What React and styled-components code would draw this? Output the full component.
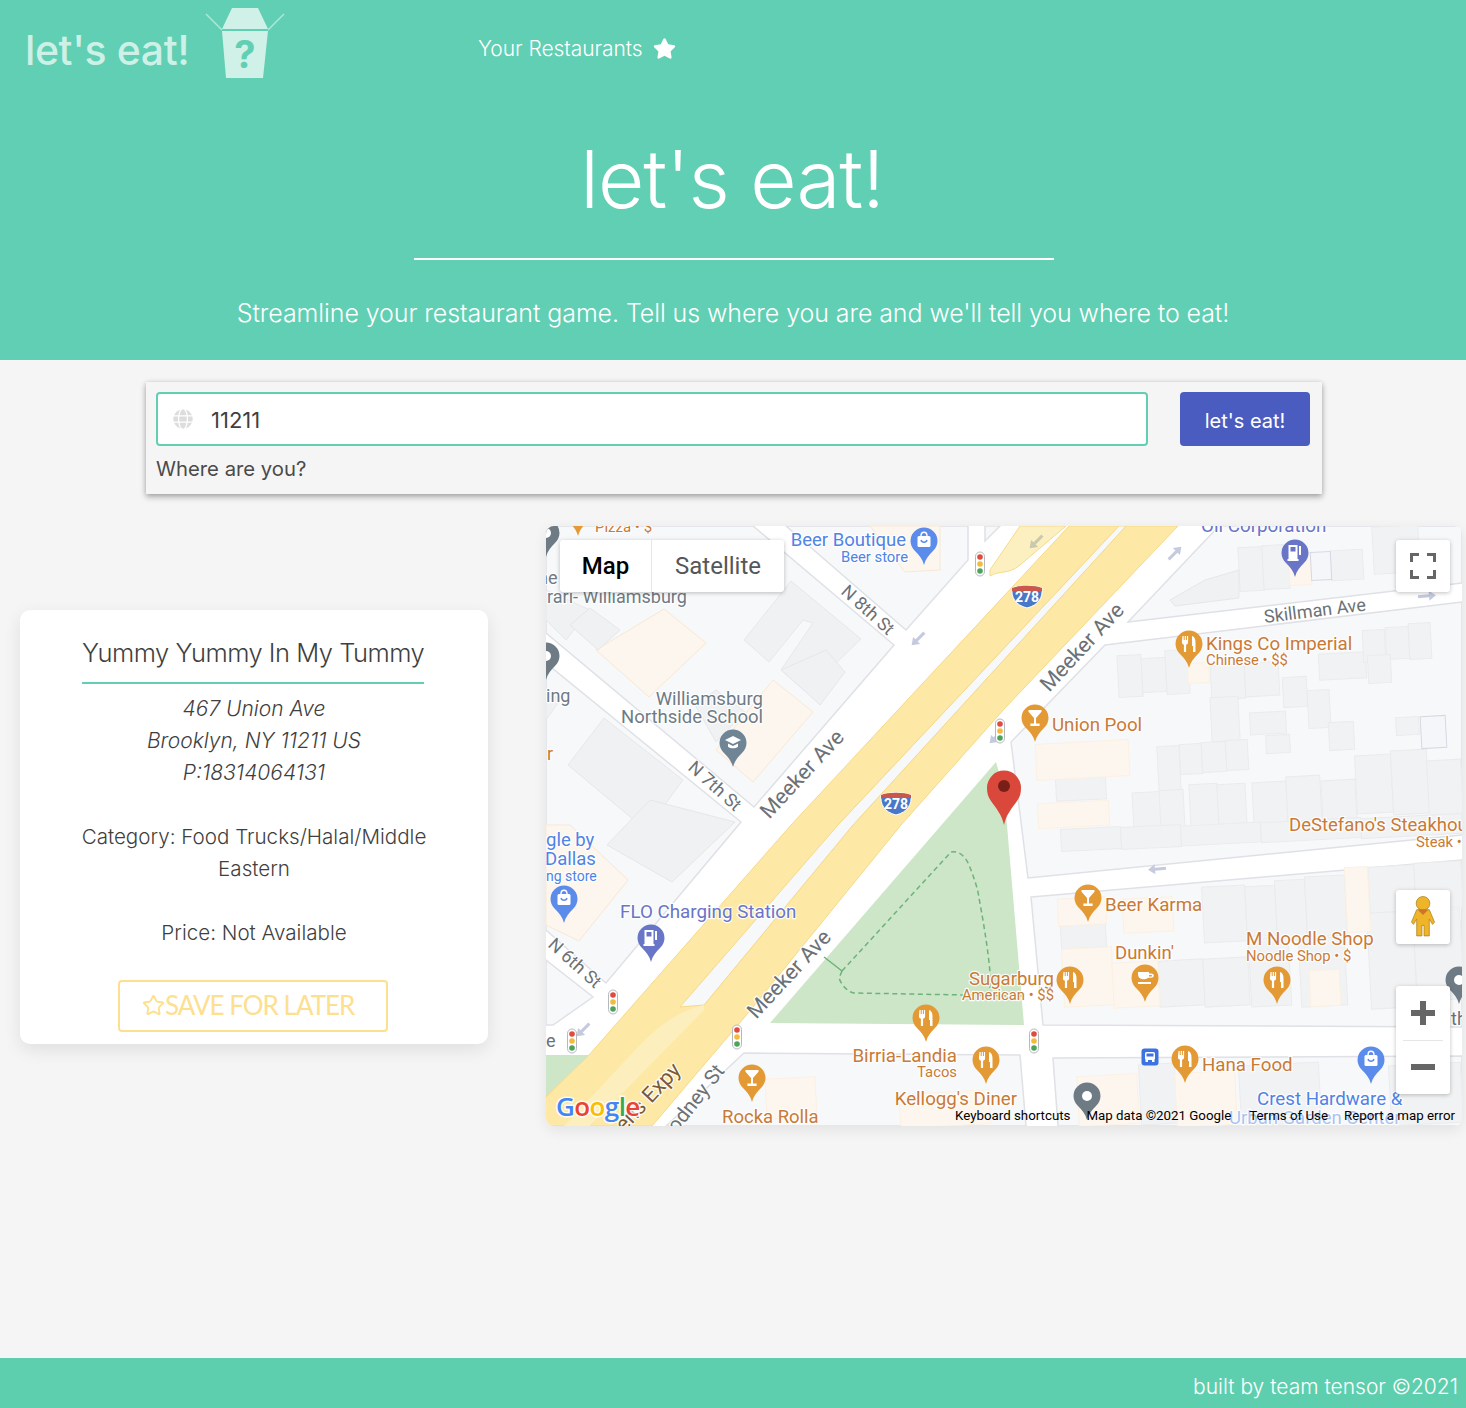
import React from 'react';
import styled, { createGlobalStyle } from 'styled-components';
import { FaStar, FaGlobe } from 'react-icons/fa';
import { Star } from 'lucide-react';

const GlobalStyle = createGlobalStyle`
  html, body {
    margin: 0;
    padding: 0;
    background: #f5f5f5;
    font-family: Inter, "Liberation Sans", sans-serif;
    color: #4a4a4a;
  }
`;

const Page = styled.div`
  min-height: 1408px;
  display: flex;
  flex-direction: column;
`;

const Header = styled.header`
  height: 360px;
  background: #61cfb3;
  color: #fff;
  display: flex;
  flex-direction: column;
`;

const Nav = styled.nav`
  height: 100px;
  display: flex;
  align-items: flex-start;
`;

const Brand = styled.div`
  width: 478px;
  padding-left: 25px;
  box-sizing: border-box;
  display: flex;
  align-items: flex-start;
`;

const BrandText = styled.span`
  font-size: 41px;
  line-height: 100px;
  font-weight: 500;
  color: rgba(255, 255, 255, 0.7);
  letter-spacing: -0.4px;
`;

const BrandBox = styled.svg`
  width: 80px;
  height: 72px;
  margin: 8px 0 0 16px;
`;

const NavLink = styled.a`
  display: flex;
  align-items: center;
  gap: 10px;
  height: 96px;
  font-size: 21px;
  font-weight: 300;
  letter-spacing: -0.05px;
  color: #fff;
`;

const Hero = styled.div`
  text-align: center;
`;

const HeroTitle = styled.h1`
  height: 160px;
  box-sizing: border-box;
  padding: 27px 4px 0 0;
  font-size: 80px;
  line-height: 104px;
  font-weight: 300;
  letter-spacing: -1px;
  width: 640px;
  margin: 0 0 0 414px;
  border-bottom: 2px solid #fff;
`;

const HeroText = styled.p`
  margin: 35px 0 0;
  font-size: 25px;
  line-height: 36px;
  font-weight: 300;
  letter-spacing: -0.09px;
`;

const SearchCard = styled.section`
  width: 1176px;
  height: 112px;
  margin: 22px auto 0 146px;
  padding: 10px 12px 0 10px;
  box-sizing: border-box;
  background: #f5f5f5;
  box-shadow: 0 3px 6px rgba(0, 0, 0, 0.3), 0 0 5px rgba(0, 0, 0, 0.1);
`;

const SearchRow = styled.div`
  display: flex;
  justify-content: space-between;
`;

const InputWrap = styled.div`
  width: 992px;
  height: 54px;
  box-sizing: border-box;
  border: 2px solid #61cfb3;
  border-radius: 4px;
  background: #fff;
  display: flex;
  align-items: center;
  gap: 18px;
  padding-left: 15px;
  color: #ddd;
`;

const InputValue = styled.span`
  font-size: 22px;
  padding-top: 2px;
  color: #3f3f3f;
  font-weight: 400;
`;

const EatButton = styled.button`
  width: 130px;
  height: 54px;
  padding: 4px 0 0;
  border: 0;
  border-radius: 4px;
  background: #4b5cc0;
  color: #fff;
  font-family: inherit;
  font-size: 20px;
  font-weight: 400;
`;

const SearchLabel = styled.div`
  margin-top: 9px;
  font-size: 20.3px;
  line-height: 28px;
  color: #4a4a4a;
`;

const Main = styled.main`
  display: grid;
  grid-template-columns: 468px 916px;
  column-gap: 58px;
  align-items: center;
  padding: 32px 4px 0 20px;
`;

const ResultCard = styled.article`
  height: 434px;
  margin-top: 2px;
  box-sizing: border-box;
  background: #fff;
  border-radius: 10px;
  box-shadow: 0 6px 18px rgba(0, 0, 0, 0.09);
  padding: 23px 40px 0;
  text-align: center;
`;

const ResultTitle = styled.h2`
  margin: 0 24px 9px 22px;
  padding-bottom: 9px;
  font-size: 25.5px;
  letter-spacing: -0.5px;
  line-height: 40px;
  font-weight: 300;
  color: #3f3f3f;
  white-space: nowrap;
  border-bottom: 2px solid #61cfb3;
`;

const ResultAddress = styled.div`
  font-size: 21px;
  line-height: 32px;
  font-style: italic;
  font-weight: 300;
  color: #3f3f3f;
`;

const ResultMeta = styled.div`
  margin-top: 32px;
  font-size: 20.6px;
  line-height: 32px;
  font-weight: 300;
  color: #3f3f3f;
`;

const SaveButton = styled.button`
  display: flex;
  align-items: center;
  width: 270px;
  height: 52px;
  margin: 31px 0 0 58px;
  padding: 0 0 2px 22px;
  box-sizing: border-box;
  border: 2px solid #fde08f;
  border-radius: 4px;
  background: #fff;
  color: #fde08f;
  font-family: Lato, sans-serif;
  font-size: 26px;
  font-weight: 400;
  letter-spacing: -1px;
  white-space: nowrap;
`;

const MapFrame = styled.div`
  position: relative;
  width: 916px;
  height: 600px;
  border-radius: 8px;
  overflow: hidden;
  box-shadow: 0 4px 14px rgba(0, 0, 0, 0.08);
`;

const MapCanvas = styled.svg`
  display: block;
  width: 916px;
  height: 600px;
`;

const MapLabel = styled.text`
  font-family: Roboto, sans-serif;
  font-size: ${(p) => p.$size}px;
  fill: ${(p) => p.$color};
  stroke: rgba(255, 255, 255, 0.9);
  stroke-width: 2.5px;
  paint-order: stroke;
  stroke-linejoin: round;
`;

const GoogleMark = styled.text`
  font-family: "Open Sans", sans-serif;
  font-size: 26px;
  font-weight: 600;
  letter-spacing: -0.6px;
  stroke: rgba(255, 255, 255, 0.85);
  stroke-width: 3px;
  paint-order: stroke;
`;

const ShieldText = styled.text`
  font-family: Roboto, sans-serif;
  font-size: 14px;
  font-weight: 700;
  fill: #fff;
  text-anchor: middle;
`;

const TypeSwitch = styled.div`
  position: absolute;
  left: 14px;
  top: 14px;
  display: flex;
  height: 52px;
  border-radius: 3px;
  overflow: hidden;
  background: #fff;
  box-shadow: 0 1px 4px rgba(0, 0, 0, 0.25);
`;

const TypeOption = styled.div`
  width: ${(p) => (p.$active ? 92 : 132)}px;
  box-sizing: border-box;
  display: flex;
  align-items: center;
  justify-content: center;
  font-family: Roboto, sans-serif;
  font-size: 24px;
  font-weight: ${(p) => (p.$active ? 500 : 400)};
  color: ${(p) => (p.$active ? '#000' : '#565656')};
  border-right: ${(p) => (p.$active ? '1px solid #e6e6e6' : '0')};
`;

const MapControl = styled.div`
  position: absolute;
  right: 12px;
  top: ${(p) => p.$top}px;
  width: 54px;
  height: ${(p) => p.$height}px;
  background: #fff;
  border-radius: 3px;
  box-shadow: 0 1px 4px rgba(0, 0, 0, 0.25);
  display: flex;
  flex-direction: column;
  align-items: center;
  justify-content: center;
`;

const ZoomDivider = styled.div`
  width: 40px;
  height: 1px;
  background: #e6e6e6;
`;

const ZoomCell = styled.div`
  height: 53px;
  display: flex;
  align-items: center;
  justify-content: center;
`;

const Attribution = styled.div`
  position: absolute;
  right: 7px;
  bottom: 3px;
  display: flex;
  gap: 16px;
  font-family: Roboto, sans-serif;
  font-size: 13.3px;
  line-height: 15px;
  color: #000;
  white-space: nowrap;
`;

const MapData = styled.span`
  margin-right: 2px;
`;

const Footer = styled.footer`
  margin-top: auto;
  height: 50px;
  background: #5ecfae;
  color: #fff;
  text-align: right;
  padding-right: 8px;
  font-size: 21px;
  font-weight: 300;
  line-height: 58px;
  overflow: hidden;
`;

const ORANGE = '#c97a35';
const BLUE = '#4f83e6';
const PURPLE = '#6975c6';
const GREY = '#6f7b84';
const ROAD = '#6c7176';

const BLOCKS = [
  '1128,622 1219,526 1462,526 1462,583',
  '1105,645 1462,602 1462,835 1028,878 1011,742',
  '1031,897 1462,860 1462,1027 1043,1025',
  '1053,1058 1462,1056 1462,1126 1058,1126',
  '744,1053 1020,1055 1026,1126 666,1126',
  '786,526 906,630 968,560 968,526',
  '753,526 894,645 754,807 546,633 546,526',
  '546,663 741,822 606,983 546,930',
  '546,960 593,997 553,1025 546,1025',
  '985,526 985,541 1000,526',
];

const PEACH = [
  '596,650 664,609 706,643 649,697',
  '773,680 813,712 753,782 716,750',
  '546,825 570,825 628,880 579,941 546,925',
  '870,526 940,526 940,570 905,572',
];

const GREY_SHAPES = [
  '744,640 791,581 861,639 806,692 781,670 813,623 803,620 769,662',
  '781,670 806,692 820,705 845,672 826,650',
  '695,705 716,690 745,712 716,742',
  '568,765 604,718 683,780 646,830',
  '607,845 650,800 735,822 672,882',
  '546,690 560,700 546,720',
  '546,590 590,610 566,640 546,620',
  '570,625 590,608 620,630 598,650',
  '1170,600 1205,580 1239,570 1239,598 1175,606',
];

// x, y, w, h of the terrace rows, each one tipped a little to follow the streets
const GREY_RECTS = [
  [1118, 655, 24, 42], [1142, 658, 24, 34], [1166, 650, 23, 44], [1211, 665, 34, 34],
  [1245, 662, 34, 34], [1283, 677, 24, 30], [1308, 690, 22, 38], [1319, 653, 47, 26],
  [1363, 630, 22, 32], [1386, 627, 23, 32], [1409, 623, 22, 36], [1368, 655, 23, 28],
  [1211, 697, 28, 44], [1250, 712, 36, 22], [1266, 735, 24, 18], [1329, 722, 25, 28],
  [1396, 717, 23, 18], [1158, 746, 22, 46], [1180, 744, 22, 30], [1202, 742, 24, 30],
  [1226, 740, 22, 30], [1133, 792, 36, 36], [1160, 790, 24, 38], [1190, 784, 28, 44],
  [1218, 784, 28, 42], [1253, 782, 34, 44], [1287, 776, 34, 50], [1322, 780, 34, 44],
  [1356, 755, 36, 58], [1392, 750, 36, 64], [1428, 760, 34, 56], [1056, 778, 50, 22],
  [1239, 547, 24, 44], [1263, 545, 26, 44], [1331, 550, 32, 30], [1373, 526, 46, 47],
  [1061, 828, 60, 22], [1121, 826, 60, 22], [1181, 824, 80, 20], [1261, 820, 100, 20],
  [1361, 816, 101, 20], [1061, 925, 45, 23], [1159, 960, 45, 46], [1204, 958, 45, 48],
  [1203, 886, 43, 56], [1246, 886, 30, 50], [1276, 880, 30, 60], [1306, 876, 40, 60],
  [1250, 938, 40, 68], [1300, 938, 46, 68], [1369, 866, 46, 46], [1415, 862, 47, 46],
  [1369, 912, 46, 96], [1415, 910, 47, 90], [1140, 1064, 36, 60], [1240, 1064, 80, 60],
  [1390, 1064, 72, 60],
];

const PEACH_RECTS = [
  [1188, 663, 21, 20], [1036, 742, 93, 36], [1038, 802, 71, 25], [1289, 553, 22, 32],
  [1058, 898, 48, 27], [1063, 948, 50, 58], [1113, 962, 46, 45], [1123, 898, 50, 34],
  [1346, 867, 23, 65], [1310, 970, 30, 36], [1078, 1075, 60, 50], [1176, 1072, 60, 54],
  [766, 1078, 50, 40], [900, 1092, 90, 34],
];

const OUTLINE_RECTS = [[1311, 552, 20, 28], [1421, 716, 25, 32]];

const LABELS = [
  ['Pizza • $', 595, 532, 15, ORANGE],
  ['Oil Corporation', 1201, 532, 18.8, PURPLE],
  ['rari- Williamsburg', 547, 603, 18, GREY],
  ['ne', 538, 584, 18, GREY],
  ['ing', 546, 702, 18, GREY],
  ['r', 547, 760, 18, ORANGE],
  ['gle by', 546, 846, 18.5, BLUE],
  ['Dallas', 545, 865, 18.5, BLUE],
  ['ng store', 546, 881, 14, BLUE],
  ['Beer Boutique', 906, 546, 18.5, BLUE, 'end'],
  ['Beer store', 908, 562, 14.8, BLUE, 'end'],
  ['Williamsburg', 763, 705, 18.5, GREY, 'end'],
  ['Northside School', 763, 723, 18.5, GREY, 'end'],
  ['FLO Charging Station', 620, 918, 18.8, PURPLE],
  ['Kings Co Imperial', 1206, 650, 18.7, ORANGE],
  ['Chinese • $$', 1206, 665, 14.8, ORANGE],
  ['Union Pool', 1052, 731, 18.7, ORANGE],
  ["DeStefano's Steakhouse", 1289, 831, 18.5, ORANGE],
  ['Steak •', 1416, 847, 14.8, ORANGE],
  ['Beer Karma', 1105, 911, 18.7, ORANGE],
  ["Dunkin'", 1115, 959, 18.5, ORANGE],
  ['M Noodle Shop', 1246, 945, 18.7, ORANGE],
  ['Noodle Shop • $', 1246, 961, 14.8, ORANGE],
  ['Sugarburg', 1054, 985, 18.5, ORANGE, 'end'],
  ['American • $$', 1054, 1000, 14.8, ORANGE, 'end'],
  ['Birria-Landia', 957, 1062, 18.7, ORANGE, 'end'],
  ['Tacos', 957, 1077, 14.8, ORANGE, 'end'],
  ['Hana Food', 1202, 1071, 18.7, ORANGE],
  ["Kellogg's Diner", 1017, 1105, 18.7, ORANGE, 'end'],
  ['Rocka Rolla', 722, 1123, 18.5, ORANGE],
  ['Crest Hardware &', 1257, 1105, 18.7, BLUE],
  ['Urban Garden Center', 1229, 1124, 18.5, '#a9c3f2'],
  ['e', 546, 1047, 18, ROAD],
  ['th', 1451, 1025, 18, ROAD],
];

const ROAD_LABELS = [
  ['Skillman Ave', 1315, 612, -7, ROAD, 18],
  ['Meeker Ave', 1083, 648, -47, ROAD, 21.5],
  ['Meeker Ave', 803, 775, -47, ROAD, 21.5],
  ['Meeker Ave', 790, 975, -47, ROAD, 21.5],
  ['N 8th St', 867, 611, 42, ROAD, 18],
  ['N 7th St', 714, 787, 42, ROAD, 18],
  ['N 6th St', 574, 964, 42, ROAD, 18],
  ['Rodney St', 693, 1104, -52, ROAD, 20.5],
  ['Queens Expy', 636, 1112, -47, '#7a5a38', 21.5],
];

const PINS = [
  [578, 536, '#e39a35', null],
  [546, 557, GREY, 'dot'],
  [546, 680, GREY, 'dot'],
  [924, 565, '#5c8ceb', 'bag'],
  [733, 767, '#6f8494', 'school'],
  [1295, 577, '#6975c6', 'gas'],
  [1189, 668, '#e39a35', 'food'],
  [1035, 742, '#e39a35', 'bar'],
  [564, 923, '#5c8ceb', 'bag'],
  [651, 962, '#6975c6', 'gas'],
  [1088, 922, '#e39a35', 'bar'],
  [1145, 1002, '#e39a35', 'cafe'],
  [1070, 1004, '#e39a35', 'food'],
  [1277, 1004, '#e39a35', 'food'],
  [1459, 1004, GREY, 'dot'],
  [926, 1042, '#e39a35', 'food'],
  [986, 1084, '#e39a35', 'food'],
  [752, 1102, '#e39a35', 'bar'],
  [1185, 1083, '#e39a35', 'food'],
  [1371, 1084, '#5c8ceb', 'bag'],
  [1087, 1120, GREY, 'dot'],
];

const LIGHTS = [[980, 564], [1000, 731], [613, 1002], [572, 1041], [737, 1037], [1034, 1041]];

const ARROWS = [
  [1036, 542, 135, '#c9c9b0'], [918, 639, 135, '#c6cadf'], [1175, 553, -45, '#c6cadf'],
  [1427, 596, -5, '#c6cadf'], [1157, 869, 175, '#c6cadf'], [583, 1030, 135, '#c6cadf'],
  [996, 737, 135, '#c6cadf'],
];

function PinIcon({ kind }) {
  if (kind === 'food') {
    return (
      <g fill="#fff">
        <path d="M-6.5 -32h1.2v4h1v-4h1.2v4h1v-4h1.2v6.2c0 1.4-1 2.2-2 2.4V-16h-2.2v-7.4c-1-.2-2-1-2-2.4z" />
        <path d="M3 -32c2.5 .6 3.5 3 3.5 6.5V-16H4v-6H3z" />
      </g>
    );
  }
  if (kind === 'bar') {
    return (
      <g fill="#fff">
        <path d="M-6.5 -32h13v1.8L1 -24v5.6h3.6V-16H-4.6v-2.4H-1V-24l-5.5-6.2z" />
      </g>
    );
  }
  if (kind === 'cafe') {
    return (
      <g fill="#fff">
        <path d="M-7 -30h11v1.4h2.4c1.6 0 2.4 1 2.4 2.2s-.8 2.2-2.4 2.2H3c-1 1-2 1.4-3.5 1.4h-2c-2.6 0-4.5-2-4.5-4.6zM4 -27v1.4h2.2c.6 0 .9-.3.9-.7s-.3-.7-.9-.7z" />
        <rect x="-7" y="-20" width="13" height="2" />
      </g>
    );
  }
  if (kind === 'bag') {
    return (
      <g>
        <rect x="-6.5" y="-29" width="13" height="11" rx="1.5" fill="#fff" />
        <path d="M-3 -29c0-5 6-5 6 0" fill="none" stroke="#fff" strokeWidth="1.4" />
        <path d="M-3 -25c.8 3 5.2 3 6 0" fill="none" stroke="#5c8ceb" strokeWidth="1.4" />
      </g>
    );
  }
  if (kind === 'school') {
    return (
      <g fill="#fff">
        <path d="M-8 -27l8 -4 8 4 -8 4z" />
        <path d="M-5 -23.5v3.2c2.8 2 7.2 2 10 0v-3.2l-5 2.4z" />
      </g>
    );
  }
  if (kind === 'gas') {
    return (
      <g fill="#fff">
        <path d="M-6.5 -32h9v15h-9zM-4.5 -30v4.5h5V-30z" fillRule="evenodd" />
        <rect x="4" y="-31" width="2" height="9" />
        <rect x="-7.5" y="-18" width="11" height="2" />
      </g>
    );
  }
  if (kind === 'dot') {
    return <circle cx="0" cy="-24" r="5" fill="#fff" />;
  }
  return null;
}

function MapPin({ x, y, color, kind }) {
  return (
    <g transform={`translate(${x} ${y})`}>
      <path
        d="M0 0C-1.5 -6 -5 -10 -9 -14C-12 -17 -13.5 -20.5 -13.5 -24A13.5 13.5 0 1 1 13.5 -24C13.5 -20.5 12 -17 9 -14C5 -10 1.5 -6 0 0Z"
        fill={color}
      />
      <PinIcon kind={kind} />
    </g>
  );
}

function TrafficLight({ x, y }) {
  return (
    <g transform={`translate(${x} ${y})`}>
      <rect x="-4.5" y="-12" width="9" height="24" rx="4.5" fill="#fff" stroke="#b5b8bc" />
      <circle cy="-7" r="2.8" fill="#e04a3f" />
      <circle cy="0" r="2.8" fill="#f2bb3b" />
      <circle cy="7" r="2.8" fill="#4da35a" />
    </g>
  );
}

function Shield({ x, y }) {
  return (
    <g transform={`translate(${x} ${y})`}>
      <path d="M-15 -9C-8 -12 8 -12 15 -9C16 0 12 8 0 11C-12 8 -16 0 -15 -9Z" fill="#4a78c8" stroke="#fff" />
      <path d="M-15 -9C-8 -12 8 -12 15 -9L15 -6H-15Z" fill="#c9574c" />
      <ShieldText x="0" y="5">278</ShieldText>
    </g>
  );
}

function OneWay({ x, y, angle, color }) {
  return (
    <path
      transform={`translate(${x} ${y}) rotate(${angle})`}
      d="M-9 -1.5H2V-5L9 0L2 5V1.5H-9Z"
      fill={color}
    />
  );
}

function Terrace({ rects }) {
  return rects.map(([x, y, w, h]) => (
    <rect
      key={`${x}-${y}`}
      x={x}
      y={y}
      width={w}
      height={h}
      transform={`rotate(-3 ${x + w / 2} ${y + h / 2})`}
    />
  ));
}

function TakeoutBox() {
  return (
    <BrandBox viewBox="205 8 80 72">
      <g fill="rgba(255,255,255,0.7)">
        <polygon points="232,8 258,8 268,29 222,29" />
        <polygon points="222,31 268,31 263,78 226,78" />
      </g>
      <g stroke="rgba(255,255,255,0.5)" strokeWidth="1.5">
        <line x1="206" y1="14" x2="222" y2="30" />
        <line x1="284" y1="14" x2="268" y2="30" />
      </g>
      <text x="245" y="68" fontFamily="Inter, sans-serif" fontSize="38" fontWeight="700" fill="#61cfb3" textAnchor="middle">
        ?
      </text>
    </BrandBox>
  );
}

function StreetMap() {
  return (
    <MapCanvas viewBox="546 526 916 600">
      <rect x="546" y="526" width="916" height="600" fill="#ffffff" />
      <g fill="#f7f8fa" stroke="#dfe1e6" strokeWidth="1.5">
        {BLOCKS.map((b) => (
          <polygon key={b} points={b} />
        ))}
      </g>
      <g fill="#f1f2f3" stroke="#eaebed">
        <Terrace rects={GREY_RECTS} />
      </g>
      <g fill="#fdf6ee" stroke="#fbf0e2">
        <Terrace rects={PEACH_RECTS} />
      </g>
      <g fill="#f4f6fa" stroke="#d5d9e2">
        <Terrace rects={OUTLINE_RECTS} />
      </g>
      <g fill="#fdf6ee" stroke="#f8e8d2">
        {PEACH.map((b) => (
          <polygon key={b} points={b} />
        ))}
      </g>
      <g fill="#f0f1f2" stroke="#e6e7ea">
        {GREY_SHAPES.map((b) => (
          <polygon key={b} points={b} />
        ))}
      </g>

      <polygon points="546,1055 589,1055 546,1097" fill="#cde6c8" />
      <polygon points="996,762 1004,790 1024,1025 770,1023" fill="#cde6c8" />
      <path d="M824 957L842 971" stroke="#6db27b" strokeWidth="1.5" fill="none" />
      <path
        d="M842 971L951 852C960 850 966 858 969 865C975 880 978 890 979 898C984 925 988 950 990 972V995M842 971L839 978C842 986 848 992 854 993L1022 996"
        stroke="#6db27b"
        strokeWidth="1.5"
        strokeDasharray="5 3.5"
        fill="none"
      />

      <polygon
        points="1069,526 1119,526 838,825 704,1005 652,1126 500,1126 546,1097 589,1055 791,825"
        fill="#fde8a5"
        stroke="#f6d98a"
      />
      <polygon points="1126,526 1178,526 1006,707 901,825 749,1012 652,1126 590,1126 704,1005 853,825" fill="#fde8a5" stroke="#f6d98a" />
      <polygon points="1119,526 1126,526 853,825 704,1005 680,1007 838,825" fill="#f7f8fa" stroke="#f6d98a" />
      <path d="M704 1005C680 1010 660 1025 640 1045L564 1126H590L704 1010Z" fill="#fdefbd" />
      <path d="M990 576C1000 570 1008 575 1020 565L1066 526H1020L990 570Z" fill="#fdf0c0" stroke="#f6d98a" />

      {ARROWS.map(([x, y, a, c]) => (
        <OneWay key={`${x}-${y}`} x={x} y={y} angle={a} color={c} />
      ))}
      <Shield x={1027} y={597} />
      <Shield x={896} y={804} />
      {LIGHTS.map(([x, y]) => (
        <TrafficLight key={`${x}-${y}`} x={x} y={y} />
      ))}

      {ROAD_LABELS.map(([t, x, y, a, c, s]) => (
        <MapLabel
          key={`${t}-${x}`}
          $size={s}
          $color={c}
          x={x}
          y={y}
          textAnchor="middle"
          dominantBaseline="middle"
          transform={`rotate(${a} ${x} ${y})`}
        >
          {t}
        </MapLabel>
      ))}
      {LABELS.map(([t, x, y, s, c, anchor]) => (
        <MapLabel key={`${t}-${x}`} $size={s} $color={c} x={x} y={y} textAnchor={anchor || 'start'}>
          {t}
        </MapLabel>
      ))}
      {PINS.map(([x, y, c, k]) => (
        <MapPin key={`${x}-${y}`} x={x} y={y} color={c} kind={k} />
      ))}
      <g transform="translate(1150 1057)">
        <rect x="-8.5" y="-8.5" width="17" height="17" rx="3" fill="#3c73e0" />
        <rect x="-5" y="-5" width="10" height="8" rx="1.5" fill="#fff" />
        <rect x="-3.5" y="-3.5" width="7" height="3" fill="#3c73e0" />
        <rect x="-4.5" y="3" width="2.5" height="2" fill="#fff" />
        <rect x="2" y="3" width="2.5" height="2" fill="#fff" />
      </g>

      <g transform="translate(1004 825)">
        <path
          d="M0 0C-2 -10 -8 -17 -13 -24C-16 -28 -17 -32 -17 -37A17 17.5 0 1 1 17 -37C17 -32 16 -28 13 -24C8 -17 2 -10 0 0Z"
          fill="#d9483b"
        />
        <circle cy="-39" r="6" fill="#7a1f18" />
      </g>

      <GoogleMark x="556" y="1116">
        <tspan fill="#4285f4">G</tspan>
        <tspan fill="#ea4335">o</tspan>
        <tspan fill="#fbbc05">o</tspan>
        <tspan fill="#4285f4">g</tspan>
        <tspan fill="#34a853">l</tspan>
        <tspan fill="#ea4335">e</tspan>
      </GoogleMark>
    </MapCanvas>
  );
}

export default function App() {
  return (
    <Page>
      <GlobalStyle />
      <Header>
        <Nav>
          <Brand>
            <BrandText>let's eat!</BrandText>
            <TakeoutBox />
          </Brand>
          <NavLink>
            Your Restaurants
            <FaStar size={23} />
          </NavLink>
        </Nav>
        <Hero>
          <HeroTitle>let's eat!</HeroTitle>
          <HeroText>Streamline your restaurant game. Tell us where you are and we'll tell you where to eat!</HeroText>
        </Hero>
      </Header>

      <SearchCard>
        <SearchRow>
          <InputWrap>
            <FaGlobe size={20} />
            <InputValue>11211</InputValue>
          </InputWrap>
          <EatButton>let's eat!</EatButton>
        </SearchRow>
        <SearchLabel>Where are you?</SearchLabel>
      </SearchCard>

      <Main>
        <ResultCard>
          <ResultTitle>Yummy Yummy In My Tummy</ResultTitle>
          <ResultAddress>
            467 Union Ave
            <br />
            Brooklyn, NY 11211 US
            <br />
            P:18314064131
          </ResultAddress>
          <ResultMeta>Category: Food Trucks/Halal/Middle Eastern</ResultMeta>
          <ResultMeta>Price: Not Available</ResultMeta>
          <SaveButton>
            <Star size={23} strokeWidth={2} />
            SAVE FOR LATER
          </SaveButton>
        </ResultCard>

        <MapFrame>
          <StreetMap />
          <TypeSwitch>
            <TypeOption $active>Map</TypeOption>
            <TypeOption>Satellite</TypeOption>
          </TypeSwitch>
          <MapControl $top={14} $height={52}>
            <svg width="26" height="26" viewBox="0 0 26 26" fill="none" stroke="#666" strokeWidth="3">
              <path d="M1.5 9V1.5H9M17 1.5H24.5V9M1.5 17V24.5H9M17 24.5H24.5V17" />
            </svg>
          </MapControl>
          <MapControl $top={364} $height={54}>
            <svg width="26" height="42" viewBox="0 0 24 40">
              <circle cx="12" cy="7" r="6.5" fill="#f0b429" stroke="#a8801f" strokeWidth="0.7" />
              <path
                d="M6 13H18L23 25L21 27L18 22V38H13V28H11V38H6V22L3 27L1 25Z"
                fill="#f0b429"
                stroke="#a8801f"
                strokeWidth="0.7"
              />
              <path d="M7 13L12 18L17 13Z" fill="#c9752c" />
            </svg>
          </MapControl>
          <MapControl $top={460} $height={108}>
            <ZoomCell>
              <svg width="24" height="24" viewBox="0 0 24 24" fill="#666">
                <path d="M9 0H15V9H24V15H15V24H9V15H0V9H9Z" />
              </svg>
            </ZoomCell>
            <ZoomDivider />
            <ZoomCell>
              <svg width="24" height="6" viewBox="0 0 24 6" fill="#666">
                <rect width="24" height="6" />
              </svg>
            </ZoomCell>
          </MapControl>
          <Attribution>
            <span>Keyboard shortcuts</span>
            <MapData>Map data ©2021 Google</MapData>
            <span>Terms of Use</span>
            <span>Report a map error</span>
          </Attribution>
        </MapFrame>
      </Main>

      <Footer>built by team tensor ©2021</Footer>
    </Page>
  );
}
